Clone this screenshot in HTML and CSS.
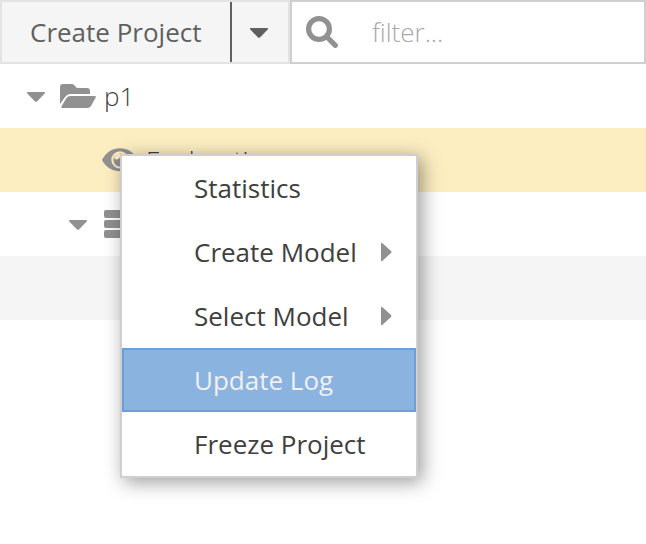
FILE: index.html
```html
<!DOCTYPE html>
<html lang="en">
<head>
<meta charset="utf-8">
<title>Projects</title>
<link rel="stylesheet" href="styles.css">
</head>
<body>
<header class="toolbar">
  <div class="split-button">
    <button class="create" type="button">Create Project</button>
    <button class="toggle" type="button" aria-label="More">
      <svg class="caret" viewBox="0 0 20 12"><path d="M2 1H18Q20 1 18.7 2.5L11.2 10.3Q10 11.4 8.8 10.3L1.3 2.5Q0 1 2 1Z"/></svg>
    </button>
  </div>
  <label class="filter">
    <svg class="search" viewBox="0 0 32 32"><circle cx="13" cy="13" r="10.4"/><path d="M21.5 21.5L29.3 29.3"/></svg>
    <input class="filter-input" type="text" placeholder="filter...">
  </label>
</header>
<main class="tree">
  <div class="row level-1">
    <svg class="caret" viewBox="0 0 20 12"><path d="M2 1H18Q20 1 18.7 2.5L11.2 10.3Q10 11.4 8.8 10.3L1.3 2.5Q0 1 2 1Z"/></svg>
    <svg class="folder" viewBox="0 0 36 24"><path d="M0 20V3Q0 0 3 0H12Q13 0 14 1L17 4H27Q30 4 30 7V10H10Q7 10 5.5 12.5Z"/><path d="M10.5 12H34.5Q36.5 12 35.6 13.8L31 22Q30 24 27.5 24H2.5Q.7 24 1.6 22.3L6.3 14.2Q7.7 12 10.5 12Z"/></svg>
    <span class="label">p1</span>
  </div>
  <div class="row level-2 selected">
    <svg class="eye" viewBox="0 0 36 24"><path fill-rule="evenodd" d="M0 12C4 4 11 .3 18 .3S32 4 36 12C32 20 25 23.2 18 23.2S4 20 0 12ZM18 3.2A8.7 8.7 0 1 0 18 20.6A8.7 8.7 0 1 0 18 3.2Z"/><path d="M15.2 6A6.5 6.5 0 1 0 24.5 12A6.5 6.5 0 0 0 18 5.5L17.3 5.6A3.5 3.5 0 1 1 12 10.2A6.5 6.5 0 0 1 15.2 6Z"/></svg>
    <span class="label">Exploration</span>
  </div>
  <div class="row level-2 branch">
    <svg class="caret" viewBox="0 0 20 12"><path d="M2 1H18Q20 1 18.7 2.5L11.2 10.3Q10 11.4 8.8 10.3L1.3 2.5Q0 1 2 1Z"/></svg>
    <svg class="stack" viewBox="0 0 32 28"><rect width="32" height="8" rx="2"/><rect y="10" width="32" height="8" rx="2"/><rect y="20" width="32" height="8" rx="2"/></svg>
  </div>
  <div class="row striped"></div>
</main>
<nav class="menu">
  <div class="item">Statistics</div>
  <div class="item">Create Model<svg class="arrow" viewBox="0 0 12 20"><path d="M1 2Q1 0 2.5 1.3L11 9Q12 10 11 11L2.5 18.7Q1 20 1 18Z"/></svg></div>
  <div class="item">Select Model<svg class="arrow" viewBox="0 0 12 20"><path d="M1 2Q1 0 2.5 1.3L11 9Q12 10 11 11L2.5 18.7Q1 20 1 18Z"/></svg></div>
  <div class="item active">Update Log</div>
  <div class="item">Freeze Project</div>
</nav>
</body>
</html>
```
FILE: styles.css
```css
* { box-sizing: border-box; }
body {
  margin: 0;
  height: 544px;
  overflow: hidden;
  background: #fff;
  color: #404040;
  font: 400 26px/36px "Open Sans", sans-serif;
}
svg { display: block; flex: none; fill: #919191; }
button, input { font: inherit; border: 0; margin: 0; padding: 0; background: none; }
.toolbar { display: flex; height: 64px; }
.split-button {
  display: flex;
  width: 290px;
  border: 2px solid #e3e3e3;
  background: #f5f5f5;
}
.create {
  width: 230px;
  padding-left: 28px;
  border-right: 2px solid #606060;
  color: #606060;
  text-align: left;
  white-space: nowrap;
}
.toggle { display: flex; flex: 1; align-items: center; padding: 2px 0 0 17px; }
.caret { width: 20px; height: 12px; }
.toggle .caret { fill: #606060; }
.filter {
  display: flex;
  flex: 1;
  align-items: center;
  gap: 34px;
  padding-left: 14px;
  border: 2px solid #cfcfcf;
}
.search { width: 32px; height: 32px; fill: none; stroke: #919191; stroke-width: 5.2; stroke-linecap: round; }
.filter-input { width: 200px; color: #404040; font-weight: 300; outline: 0; }
.filter-input::placeholder { color: #a9a9a9; opacity: 1; }
.row { display: flex; align-items: center; height: 64px; font-weight: 300; }
.level-1 { padding-left: 26px; }
.level-1 .caret { margin: 2px 14px 0 0; }
.folder { width: 36px; height: 24px; margin-right: 8px; }
.level-2 { padding-left: 102px; }
.selected { background: #fdeec2; }
.eye { width: 36px; height: 24px; margin-right: 8px; }
.branch { padding-left: 68px; }
.branch .caret { margin: 2px 16px 0 0; }
.stack { width: 32px; height: 28px; }
.striped { background: #f5f5f5; }
.menu {
  position: absolute;
  left: 120px;
  top: 154px;
  width: 298px;
  border: 2px solid #cfcfcf;
  background: #fff;
  box-shadow: 4px 4px 18px rgba(0, 0, 0, .4);
}
.item {
  display: flex;
  align-items: center;
  justify-content: space-between;
  height: 64px;
  padding: 0 22px 0 70px;
  border: 2px solid transparent;
}
.active { border-color: #6a9fdb; background: #8ab3e0; color: #f0f0f0; }
.arrow { width: 12px; height: 20px; }
```
